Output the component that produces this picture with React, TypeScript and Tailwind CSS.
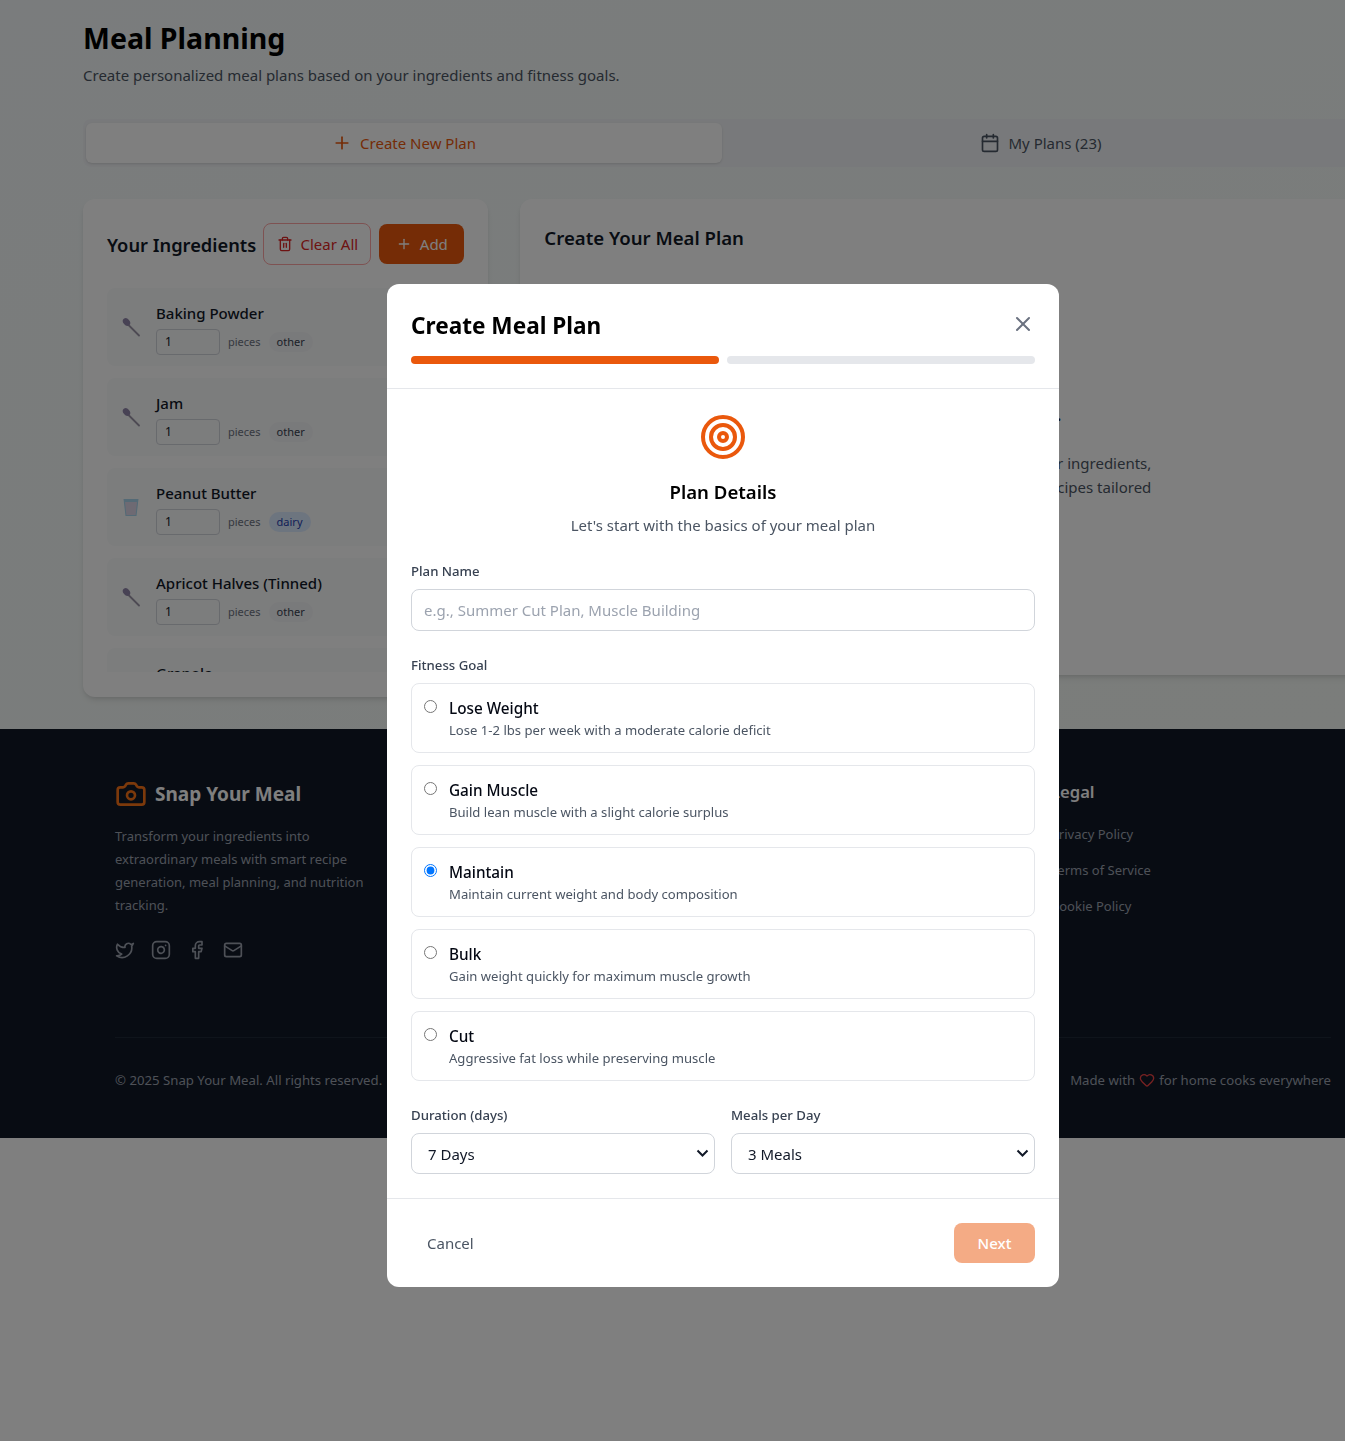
import { Calendar, Camera, Facebook, Heart, Instagram, Mail, Plus, Target, Trash2, Twitter, X } from 'lucide-react';

const ingredients = [
  { name: 'Baking Powder', category: 'other' },
  { name: 'Jam', category: 'other' },
  { name: 'Peanut Butter', category: 'dairy' },
  { name: 'Apricot Halves (Tinned)', category: 'other' },
  { name: 'Granola', category: 'other' },
];

const goals = [
  { name: 'Lose Weight', desc: 'Lose 1-2 lbs per week with a moderate calorie deficit' },
  { name: 'Gain Muscle', desc: 'Build lean muscle with a slight calorie surplus' },
  { name: 'Maintain', desc: 'Maintain current weight and body composition', checked: true },
  { name: 'Bulk', desc: 'Gain weight quickly for maximum muscle growth' },
  { name: 'Cut', desc: 'Aggressive fat loss while preserving muscle' },
];

const SpoonIcon = () => (
  <svg viewBox="0 0 18 20" className="w-[18px] h-5 shrink-0">
    <path d="M6 7.5 L17 18.5" stroke="#9a95a6" strokeWidth="1.8" strokeLinecap="round" />
    <ellipse cx="4.5" cy="5" rx="3.2" ry="4.2" transform="rotate(-40 4.5 5)" fill="#8f84a8" />
  </svg>
);

const GlassIcon = () => (
  <svg viewBox="0 0 18 20" className="w-[18px] h-5 shrink-0">
    <path d="M1.5 2 H16.5 L14.5 19 H3.5 Z" fill="#a8d4ec" />
    <path d="M3 5 H15 L13.6 18 H4.4 Z" fill="#dcd4e6" />
  </svg>
);

const IngredientRow = ({ name, category }: { name: string; category: string }) => (
  <div className="flex items-center gap-4 bg-[#f9fafb] rounded-lg pl-[15px] pr-3 h-[78px] shrink-0">
    {category === 'dairy' ? <GlassIcon /> : <SpoonIcon />}
    <div className="self-start pt-[15px]">
      <div className="text-[15px] leading-5 font-medium text-[#111827]">{name}</div>
      <div className="flex items-center mt-[6px]">
        <div className="w-16 h-[26px] border border-[#d1d5db] rounded text-xs leading-6 pl-2 text-[#111827]">1</div>
        <span className="text-[11px] text-[#6b7280] ml-2">pieces</span>
        <span
          className={
            category === 'dairy'
              ? 'ml-2 px-2 h-5 leading-5 rounded-full text-[11px] bg-[#dbeafe] text-[#1e40af]'
              : 'ml-2 px-2 h-5 leading-5 rounded-full text-[11px] bg-[#f3f4f6] text-[#374151]'
          }
        >
          {category}
        </span>
      </div>
    </div>
  </div>
);

const Page = () => (
  <div className="w-[1345px] overflow-hidden">
    <div className="bg-gradient-to-br from-[#f4f9fa] to-[#f6faf6] pl-[83px] w-[1363px] pt-5 pb-8">
      <div className="w-[1280px]">
        <h1 className="text-[28.5px] leading-9 font-bold text-black">Meal Planning</h1>
        <p className="mt-[7px] text-[15px] leading-6 text-[#4b5563]">Create personalized meal plans based on your ingredients and fitness goals.</p>

        <div className="mt-8 h-12 bg-[#f1f3f6] rounded-lg py-1 px-[3px] flex">
          <div className="w-[636px] bg-white rounded-md shadow-sm flex items-center justify-center gap-2 text-[#ea580c] text-[15px]">
            <Plus size={20} />
            <span>Create New Plan</span>
          </div>
          <div className="flex-1 flex items-center justify-center gap-2 text-[#4b5563] text-[15px]">
            <Calendar size={20} />
            <span>My Plans (23)</span>
          </div>
        </div>

        <div className="mt-8 grid grid-cols-3 gap-8 items-start">
          <section className="bg-white rounded-xl shadow-md px-6 py-[25px]">
            <div className="flex items-center justify-between h-10 mb-6">
              <h2 className="text-[18.3px] leading-7 font-semibold text-[#111827] whitespace-nowrap mt-0.5">Your Ingredients</h2>
              <div className="flex items-center gap-2">
                <button className="h-[42px] w-[108px] flex items-center justify-center gap-2 border border-[#fca5a5] rounded-lg text-[#dc2626] text-[15px]">
                  <Trash2 size={16} />
                  Clear All
                </button>
                <button className="h-10 w-[85px] flex items-center justify-center gap-2 bg-[#ea580c] rounded-lg text-white text-[15px]">
                  <Plus size={16} />
                  Add
                </button>
              </div>
            </div>
            <div className="h-96 overflow-hidden flex flex-col gap-3">
              {ingredients.map((item) => (
                <IngredientRow key={item.name} {...item} />
              ))}
            </div>
          </section>

          <section className="col-span-2 bg-white rounded-xl shadow-md px-6 pt-[25px] h-[476px]">
            <h2 className="text-[18.6px] leading-7 font-semibold text-[#111827]">Create Your Meal Plan</h2>
            <div className="mt-[148px] ml-[187px] w-[420px]">
              <h3 className="w-[330px] text-right text-[18.6px] leading-7 font-semibold text-[#111827] whitespace-nowrap">Ready to plan your meals.</h3>
              <p className="mt-[23px] text-right text-[15px] leading-6 text-[#4b5563] whitespace-nowrap">
                Turn what you have into a plan based on your ingredients,
                <br />
                we will generate personalized recipes tailored
              </p>
            </div>
          </section>
        </div>
      </div>
    </div>

    <footer className="bg-[#111827] h-[409px]">
      <div className="w-[1216px] ml-[115px] pt-12">
        <div className="grid grid-cols-4 gap-8 h-[260px]">
          <div>
            <div className="flex items-center gap-2 h-[34px]">
              <Camera size={32} className="text-[#f97316]" />
              <span className="text-[19px] leading-7 font-bold text-white">Snap Your Meal</span>
            </div>
            <p className="mt-[14px] w-[260px] text-[13px] leading-[23px] text-[#9ca3af]">
              Transform your ingredients into extraordinary meals with smart recipe generation, meal planning, and nutrition tracking.
            </p>
            <div className="mt-[23px] flex gap-4 text-[#9ca3af]">
              <Twitter size={20} />
              <Instagram size={20} />
              <Facebook size={20} />
              <Mail size={20} />
            </div>
          </div>
          <div />
          <div />
          <div>
            <h3 className="mt-px text-[16.6px] leading-7 font-semibold text-white">Legal</h3>
            <ul className="mt-[18px] flex flex-col gap-4 text-[13px] leading-5 text-[#9ca3af]">
              <li>Privacy Policy</li>
              <li>Terms of Service</li>
              <li>Cookie Policy</li>
            </ul>
          </div>
        </div>
        <div className="border-t border-[#1f2937] pt-8 flex items-center justify-between text-[13.2px] leading-5 text-[#9ca3af]">
          <span>© 2025 Snap Your Meal. All rights reserved.</span>
          <span className="flex items-center gap-1">
            Made with <Heart size={16} className="text-[#ef4444]" /> for home cooks everywhere
          </span>
        </div>
      </div>
    </footer>
  </div>
);

const ChevronMark = () => (
  <svg viewBox="0 0 13 8" className="absolute right-[6px] top-[16px] w-[13px] h-2 pointer-events-none">
    <path d="M1.5 1.5 L6.5 6.5 L11.5 1.5" fill="none" stroke="#111827" strokeWidth="2" />
  </svg>
);

const PlanModal = () => (
  <div className="fixed inset-0 bg-black/50 flex items-start justify-center pl-[101px] pt-[284px]">
    <div className="w-[672px] bg-white rounded-xl">
      <div className="p-6 border-b border-[#e5e7eb]">
        <div className="flex items-center justify-between h-8 mb-4">
          <h2 className="text-[22.6px] font-bold text-black mt-1">Create Meal Plan</h2>
          <X size={24} className="text-[#6b7280]" />
        </div>
        <div className="flex gap-2">
          <div className="flex-1 h-2 rounded-full bg-[#ea580c]" />
          <div className="flex-1 h-2 rounded-full bg-[#e5e7eb]" />
        </div>
      </div>

      <div className="p-6 border-b border-[#e5e7eb]">
        <div className="flex flex-col items-center text-center">
          <Target size={48} className="text-[#ea580c]" />
          <h3 className="mt-[17px] text-[18.6px] leading-7 font-semibold text-black">Plan Details</h3>
          <p className="mt-[7px] text-[15px] leading-6 text-[#4b5563]">Let's start with the basics of your meal plan</p>
        </div>

        <label className="block mt-6 mb-2 text-[13.2px] leading-5 font-medium text-[#374151]">Plan Name</label>
        <input
          placeholder="e.g., Summer Cut Plan, Muscle Building"
          className="block w-full h-[42px] px-3 border border-[#d1d5db] rounded-lg text-[15px] placeholder:text-[#9ca3af]"
        />

        <label className="block mt-6 mb-2 text-[13.2px] leading-5 font-medium text-[#374151]">Fitness Goal</label>
        <div className="flex flex-col gap-3">
          {goals.map((goal) => (
            <label key={goal.name} className="flex items-start h-[70px] p-3 border border-[#e5e7eb] rounded-lg">
              <input type="radio" name="goal" checked={!!goal.checked} readOnly className="mt-1 w-[13px] h-[13px]" />
              <span className="ml-3">
                <span className="block text-[15.3px] leading-6 font-medium text-[#030712]">{goal.name}</span>
                <span className="block text-[13.1px] leading-5 text-[#4b5563]">{goal.desc}</span>
              </span>
            </label>
          ))}
        </div>

        <div className="mt-6 grid grid-cols-2 gap-4">
          <div>
            <label className="block mb-2 text-[13.2px] leading-5 font-medium text-[#374151]">Duration (days)</label>
            <div className="relative">
              <select defaultValue="7" className="appearance-none block w-full h-[41px] px-4 pt-px border border-[#d1d5db] rounded-lg bg-white text-[15px] text-[#111827]">
                <option value="7">7 Days</option>
                <option value="14">14 Days</option>
              </select>
              <ChevronMark />
            </div>
          </div>
          <div>
            <label className="block mb-2 text-[13.2px] leading-5 font-medium text-[#374151]">Meals per Day</label>
            <div className="relative">
              <select defaultValue="3" className="appearance-none block w-full h-[41px] px-4 pt-px border border-[#d1d5db] rounded-lg bg-white text-[15px] text-[#111827]">
                <option value="3">3 Meals</option>
                <option value="4">4 Meals</option>
              </select>
              <ChevronMark />
            </div>
          </div>
        </div>
      </div>

      <div className="p-6 flex items-center justify-between">
        <button className="h-10 px-4 text-[15px] text-[#4b5563]">Cancel</button>
        <button className="h-10 w-[81px] rounded-lg bg-[#ea580c] opacity-50 text-white text-[15px] font-medium">Next</button>
      </div>
    </div>
  </div>
);

export default function App() {
  return (
    <div className="relative h-[1441px] overflow-hidden bg-white font-['Noto_Sans',sans-serif]">
      <Page />
      <PlanModal />
    </div>
  );
}
